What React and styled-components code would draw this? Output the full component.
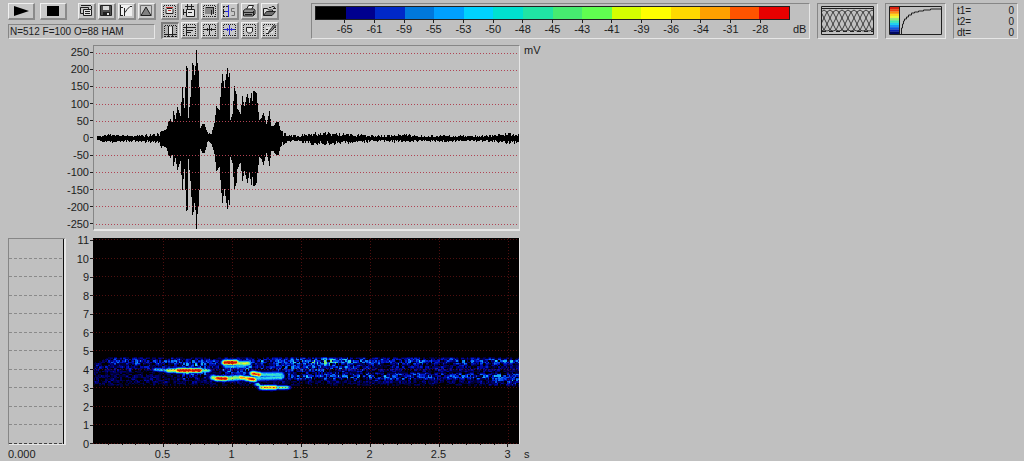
import React from "react";
import styled, { createGlobalStyle, css } from "styled-components";

const GlobalStyle = createGlobalStyle`
  * { box-sizing: border-box; }
  body {
    margin: 0;
    background: #c0c0c0;
    color: #1c1c1c;
    font: 11px/12px "Liberation Sans", Arial, sans-serif;
  }
`;

const sunken = css`
  border: 1px solid;
  border-color: #868686 #e6e6e6 #e6e6e6 #868686;
`;

const Page = styled.div`
  padding: 3px 0 0;
`;

const Toolbar = styled.header`
  display: flex;
  gap: 7px;
  height: 36px;
  padding: 0 6px 0 8px;
`;

const Transport = styled.div`
  display: flex;
  flex-direction: column;
  gap: 4px;
  width: 147px;
`;

const TransportRow = styled.div`
  display: flex;
  gap: 5px;
`;

const SmallButtons = styled.div`
  display: flex;
  gap: 2px;
  margin-left: 6px;
`;

const ToolGrid = styled.div`
  display: grid;
  grid-template-columns: repeat(6, 18px);
  gap: 2px;
  margin: 0 25px 0 -1px;
`;

const ToolButton = styled.button`
  display: grid;
  place-items: center;
  flex: none;
  width: ${(p) => (p.$wide ? 27 : 18)}px;
  height: 17px;
  padding: 0;
  background: ${(p) => (p.$pressed ? "#b4b4b4" : "#c8c8c8")};
  border-style: solid;
  border-width: ${(p) => (p.$pressed ? "2px 1px 1px 2px" : "1px 2px 2px 1px")};
  border-color: ${(p) =>
    p.$pressed ? "#7c7c7c #e4e4e4 #e4e4e4 #7c7c7c" : "#f0f0f0 #8a8a8a #8a8a8a #f0f0f0"};
  svg { display: block; }
`;

const Status = styled.output`
  ${sunken}
  height: 15px;
  padding-left: 1px;
  font-size: 10px;
  line-height: 13px;
  white-space: nowrap;
`;

const Panel = styled.section`
  ${sunken}
  flex: none;
  width: 61px;
  padding: 2px 3px 3px;
  svg { display: block; width: 100%; height: 29px; }
`;

const ScalePanel = styled.section`
  ${sunken}
  flex: 1;
  min-width: 0;
  display: grid;
  grid-template-columns: minmax(0, 1fr) 19px;
  grid-template-rows: 14px 16px;
  padding: 2px 0 0 3px;
`;

const ScaleBar = styled.div`
  grid-column: 1;
  display: flex;
  border: 1px solid #202020;
`;

const Swatch = styled.span`
  flex: 1;
  background: ${(p) => p.$color};
`;

const ScaleLabels = styled.div`
  grid-column: 1;
  display: flex;
`;

const HalfStep = styled.span`
  flex: 1;
`;

const ScaleLabel = styled.span`
  flex: 2;
  text-align: center;
  &::before {
    content: "";
    display: block;
    width: 1px;
    height: 3px;
    margin: 0 auto;
    background: #202020;
  }
`;

const ScaleUnit = styled.span`
  padding: 3px 0 0 3px;
`;

const Times = styled.dl`
  ${sunken}
  flex: none;
  width: 65px;
  display: grid;
  grid-template-columns: 1fr auto;
  grid-auto-rows: 11px;
  font-size: 10px;
  line-height: 11px;
  margin: 0;
  padding: 1px 3px;
  dt, dd { margin: 0; }
`;

const Charts = styled.main`
  display: grid;
  grid-template-columns: 66px 27px minmax(0, 427fr) minmax(0, 504fr);
  align-items: start;
  margin-top: 5px;
`;

const Axis = styled.div`
  grid-column: 2;
  display: flex;
  flex-direction: column;
  justify-content: space-between;
  align-items: flex-end;
  height: ${(p) => p.$height}px;
`;

const AxisLabel = styled.span`
  display: flex;
  align-items: center;
  gap: 1px;
  line-height: 16px;
  &::after {
    content: "";
    width: 3px;
    height: 1px;
    background: #202020;
  }
`;

const WaveFrame = styled.div`
  ${sunken}
  border-bottom-width: 2px;
  margin-top: 1px;
  height: 186px;
  svg { display: block; width: 100%; height: 183px; }
`;

const Unit = styled.span`
  padding-left: 4px;
  align-self: ${(p) => (p.$end ? "end" : "start")};
`;

const SpectrumColumn = styled.div`
  padding: 6px 0 0 8px;
`;

const SpectrumFrame = styled.div`
  ${sunken}
  border-right-width: 2px;
  margin-bottom: 3px;
  svg { display: block; width: 100%; height: 205px; }
`;

const SonogramColumn = styled.div`
  padding-top: 6px;
`;

const SonogramFrame = styled.div`
  background: #000;
  border-right: 1px solid #e6e6e6;
  svg { display: block; width: 100%; height: 206px; }
`;

const Ticks = styled.svg`
  display: block;
  width: 100%;
  height: 4px;
`;

const TimeLabels = styled.div`
  display: flex;
  margin-right: -22px;
`;

const TimeLead = styled.span`
  flex: 35;
`;

const TimeLabel = styled.span`
  flex: 69;
  text-align: center;
`;

/* ---------- colour scale ---------- */

const COLORS = [
  "#000000", "#00008e", "#0028c8", "#0078dc", "#00a0ff", "#00d2ff", "#00e0d0", "#20e4a4",
  "#46ec70", "#60ff50", "#d4ff00", "#ffff00", "#ffd800", "#ffa000", "#ff5400", "#e80000",
];
const LEVELS = [-65, -61, -59, -55, -53, -50, -48, -45, -43, -41, -39, -36, -34, -31, -28];

/* ---------- waveform ---------- */

const ENVELOPE = [
  [97, 2], [108, 3], [130, 2], [150, 3], [156, 3], [160, 6], [166, 9], [168, 16], [170, 19],
  [172, 16], [173, 27], [175, 19], [177, 32], [180, 22], [182, 51], [184, 30], [186, 73],
  [187, 71], [188, 20], [190, 42], [192, 76], [193, 74], [194, 64], [195, 72], [196, 90],
  [197, 76], [198, 68], [199, 52], [200, 10], [202, 14], [204, 14], [206, 8], [208, 4],
  [211, 4], [214, 15], [216, 32], [219, 28], [221, 55], [222, 65], [224, 50], [225, 58],
  [227, 71], [228, 62], [229, 66], [230, 18], [232, 24], [234, 52], [236, 44], [237, 30],
  [240, 24], [242, 42], [244, 32], [247, 45], [249, 35], [251, 46], [252, 38], [253, 48],
  [256, 45], [257, 35], [259, 18], [261, 20], [263, 26], [266, 14], [269, 27], [271, 12],
  [273, 12], [276, 17], [278, 16], [280, 8], [283, 5], [288, 3], [297, 2], [308, 4],
  [318, 5], [340, 4], [360, 3], [380, 2], [400, 3], [423, 2], [457, 2], [480, 2], [500, 3],
  [517, 5], [519, 5],
];

const noise = (a, b) => {
  let h = (Math.imul(a + 11, 374761393) + Math.imul(b + 7, 668265263)) | 0;
  h = Math.imul(h ^ (h >>> 13), 1274126177);
  return ((h ^ (h >>> 16)) >>> 0) / 4294967296;
};

const envelopeAt = (x) => {
  const i = ENVELOPE.findIndex((p) => p[0] >= x);
  if (i <= 0) return ENVELOPE[0][1];
  const [x0, y0] = ENVELOPE[i - 1];
  const [x1, y1] = ENVELOPE[i];
  return y0 + ((y1 - y0) * (x - x0)) / (x1 - x0);
};

const wavePath = (() => {
  let d = "";
  for (let x = 97; x < 520; x++) {
    const a = envelopeAt(x);
    const small = a < 7;
    const reach = (seed) => {
      const n = noise(x, seed);
      return Math.max(1, Math.round(a * (small ? 0.4 + n : 0.98 + 0.02 * n)));
    };
    const up = reach(1);
    const down = reach(2);
    d += `M${x - 94} ${92 - up}h1v${up + down + 1}h-1z`;
  }
  return d;
})();

const MILLIVOLTS = [250, 200, 150, 100, 50, 0, -50, -100, -150, -200, -250];
const KILOHERTZ = [11, 10, 9, 8, 7, 6, 5, 4, 3, 2, 1, 0];
const SECONDS = ["0.5", "1", "1.5", "2", "2.5", "3"];

function Waveform() {
  return (
    <svg viewBox="0 0 425 183" preserveAspectRatio="none" shapeRendering="crispEdges" role="img" aria-label="Waveform">
      <path d={wavePath} fill="#000" />
      {MILLIVOLTS.filter((v) => v !== 0).map((v) => {
        const y = Math.round(92 - v * 0.342) + 0.5;
        return <line key={v} x1="2" x2="425" y1={y} y2={y} stroke="#b04454" strokeDasharray="1 2" />;
      })}
    </svg>
  );
}

/* ---------- sonogram ---------- */

// Tonal ridges: start x, start y, end x, end y, half thickness, strength.
const RIDGES = [
  [156, 369, 168, 370, 2, 0.48],
  [168, 370, 180, 370, 2.4, 0.74],
  [178, 370, 199, 370, 2.6, 1.08],
  [199, 370, 207, 370, 2, 0.64],
  [225, 362, 235, 362, 2.8, 1.08],
  [237, 363, 247, 363, 2.8, 0.74],
  [226, 366, 242, 366, 2.4, 0.44],
  [213, 377, 216, 378, 2.8, 0.72],
  [217, 378, 225, 378, 2.6, 1.08],
  [227, 378, 240, 377, 3, 0.68],
  [240, 377, 247, 378, 2.4, 0.88],
  [247, 378, 253, 379, 2.6, 1.02],
  [253, 373, 258, 374, 2.6, 1.02],
  [260, 374, 280, 374, 2.8, 0.54],
  [256, 378, 280, 377, 2.8, 0.5],
  [258, 384, 261, 387, 2, 0.66],
  [262, 387, 274, 387, 2.4, 0.88],
  [274, 387, 286, 387, 2, 0.62],
];

const ramp = (v, a, b) => Math.min(1, Math.max(0, (v - a) / (b - a)));
const bump = (v, centre, half) => Math.max(0, 1 - ((v - centre) / half) ** 2);

const strengthAt = (x, y) => {
  const cx = Math.floor((x * 2) / 3);
  const cy = Math.floor((y * 2) / 3);
  const n = noise(cx, cy) * 0.55 + noise(cx >> 1, (cy >> 1) + 900) * 0.45;
  const early = ramp(x, 98, 112);
  const late = ramp(x, 245, 275);
  let base = bump(y, 361, 5) * (0.27 + 0.02 * late + 0.16 * bump(x, 322, 40)) * early;
  base = Math.max(base, bump(y, 367, 8) * (0.17 + 0.12 * bump(x, 315, 60)));
  base = Math.max(base, bump(y, 376, 5) * (0.13 + 0.16 * late));
  base = Math.max(base, bump(y, 380, 7) * (0.14 + 0.13 * ramp(x, 480, 510)));
  if (x > 181 && x < 206) base = Math.max(base, bump(y, 369, 13) * (cx % 3 ? 0.4 : 0.2));
  if (x > 222 && x < 252) base = Math.max(base, bump(y, 368, 12) * 0.32);
  let value = base * Math.max(0, n * 1.9 - 0.26);
  RIDGES.forEach(([x0, y0, x1, y1, half, power]) => {
    const dy = (y - (y0 + (y1 - y0) * ramp(x, x0, x1))) / half;
    const dx = Math.max(0, x0 - x, x - x1) / 4;
    value = Math.max(value, power * Math.exp(-dy * dy - dx * dx) * (0.82 + 0.26 * n));
  });
  return value;
};

const HEAT = [
  "#000000", "#000038", "#00006c", "#0008a4", "#0020d0", "#0450ec", "#0c7cf4", "#18a8f4", "#2cd0e8",
  "#40e4c0", "#60ec90", "#90f060", "#c8f040", "#f4ec30", "#ffc820", "#ff9018", "#f85810", "#e82c08", "#c81800",
];

const sonogramPaths = (() => {
  const paths = HEAT.map(() => "");
  for (let y = 355; y < 393; y++) {
    for (let x = 94; x < 519; x++) {
      const level = Math.min(HEAT.length - 1, Math.floor(strengthAt(x, y) * 18.5));
      if (level > 0) paths[level] += `M${x - 93} ${y - 238}h1v1h-1z`;
    }
  }
  return paths;
})();

function Sonogram() {
  return (
    <svg viewBox="0 0 426 206" preserveAspectRatio="none" shapeRendering="crispEdges" role="img" aria-label="Sonogram">
      <rect width="426" height="206" fill="#020000" />
      {sonogramPaths.map((d, i) => (d ? <path key={i} d={d} fill={HEAT[i]} /> : null))}
      <g stroke="#8c1c1c" strokeDasharray="1 2" opacity="0.55">
        {KILOHERTZ.map((k) => (
          <line key={k} x1="0" x2="426" y1={Math.round(205 - k * 18.55) + 0.5} y2={Math.round(205 - k * 18.55) + 0.5} />
        ))}
        {SECONDS.map((s, i) => (
          <line key={s} x1={Math.round(70 + i * 68.9) + 0.5} x2={Math.round(70 + i * 68.9) + 0.5} y1="0" y2="206" />
        ))}
      </g>
    </svg>
  );
}

function TimeTicks() {
  const ticks = Array.from({ length: 30 }, (_, i) => i + 1);
  return (
    <Ticks viewBox="0 0 427 4" preserveAspectRatio="none" shapeRendering="crispEdges" aria-hidden="true">
      {ticks.map((i) => (
        <rect key={i} x={Math.round(1 + i * 13.78)} y="0" width="1" height={i % 5 ? 1 : 3} fill="#181818" />
      ))}
    </Ticks>
  );
}

function Spectrum() {
  return (
    <svg viewBox="0 0 55 205" preserveAspectRatio="none" shapeRendering="crispEdges" role="img" aria-label="Spectrum">
      {KILOHERTZ.slice(1).map((k) => (
        <line key={k} x1="0" x2="55" y1={Math.round(204 - k * 18.55) + 0.5} y2={Math.round(204 - k * 18.55) + 0.5}
          stroke={k ? "#8a8a8a" : "#404040"} strokeDasharray="3 2" />
      ))}
      <rect x="54" y="0" width="1" height="205" fill="#101010" />
    </svg>
  );
}

/* ---------- toolbar drawings ---------- */

const dots = "M2 1.5h12M2 12.5h12M1.5 2v11M13.5 2v11";

const ICONS = {
  copy: (
    <>
      <path d="M1.5 3.5h8v6h-8zM2 1.5h10M12.5 2v3" />
      <path d="M4.5 5.5h8v6h-8z" fill="#e4e4e4" />
      <path d="M6 7.5h5M6 9.5h5" />
    </>
  ),
  save: (
    <>
      <path d="M1.5 1.5h11v10h-11z" fill="#505050" />
      <path d="M4 2h6v4H4z" fill="#d8d8d8" stroke="none" />
      <path d="M4 8h7v4H4z" fill="#202020" stroke="none" />
      <path d="M8 9h2v2H8z" fill="#e4e4e4" stroke="none" />
    </>
  ),
  curve: (
    <>
      <path d="M1 1h12v11H1z" fill="#f0f0f0" stroke="none" />
      <path d="M1.5 1v11M1 3.5h3M5.5 4v8M6 8.5l2-3 3-3h2M2 11.5h2" />
    </>
  ),
  peak: (
    <>
      <path d="M1.5 1.5h11v10h-11z" stroke="#707070" />
      <path d="M2 11.5L7 3l5 8.5z" fill="#808080" />
    </>
  ),
  redFrame: (
    <>
      <path d={dots} strokeDasharray="1 1" />
      <path d="M4 5.5l1-1h5l1 1v4h-7z" fill="#e8e8e8" />
      <path d="M4 3.5h7M6 6.5h3" stroke="#c03030" />
    </>
  ),
  stamp: (
    <>
      <path d="M3 2.5h9M5.5 0v5M9.5 0v5M1.5 5v6" />
      <path d="M4.5 5.5h8v7h-8z" fill="#e8e8e8" />
      <path d="M6 8.5h4M1 8.5h3" />
    </>
  ),
  shade: (
    <>
      <path d={dots} strokeDasharray="1 1" />
      <path d="M3 3h9v7H3z" fill="#888" stroke="none" />
      <path d="M4 3.5h8M11.5 4v6M9.5 6v5" />
    </>
  ),
  blueS: (
    <>
      <path d="M1.5 2v11M1 2.5h6M1 7.5h6M1 12.5h6" strokeDasharray="2 1" />
      <path d="M6.5 1v12M3 7.5h4" stroke="#2828e0" />
      <path d="M12.5 4.5H9.5v3h3v4h-3" stroke="#707070" />
    </>
  ),
  print: (
    <>
      <path d="M4.5 5.5l2-4h5l-2 4" fill="#f0f0f0" />
      <path d="M1.5 6.5l2-1.5h8l1.5 1v4l-2 2h-9.5z" fill="#909090" />
      <path d="M2 8.5h9M3 10.5h7M11.5 7v5" />
    </>
  ),
  open: (
    <>
      <path d="M1.5 11.5v-7h4l1 1.5h4v2" fill="#d8d8d8" />
      <path d="M1.5 11.5l3-4h9l-3.5 4z" fill="#707070" />
      <path d="M7 3.5h2l1-1h2l1 2M11 4.5h3" />
    </>
  ),
  columns: (
    <>
      <path d={dots} strokeDasharray="1 1" />
      <path d="M6 3h3v7H6z" fill="#e8e8e8" stroke="none" />
      <path d="M5.5 2v11M9.5 2v11M2 10.5h11" />
    </>
  ),
  rows: (
    <>
      <path d={dots} strokeDasharray="1 1" />
      <path d="M4.5 2v10M2 4.5h11M5 7.5h6M5 9.5h4" />
    </>
  ),
  cross: (
    <>
      <path d={dots} strokeDasharray="1 1" />
      <path d="M7.5 2v10M2 6.5h11M5.5 5v3M9.5 5v3" />
    </>
  ),
  blueCross: (
    <>
      <path d={dots} strokeDasharray="1 1" />
      <path d="M7.5 2v10M2 6.5h11M5.5 5v3M9.5 5v3" stroke="#2828d0" />
    </>
  ),
  pocket: (
    <>
      <path d={dots} strokeDasharray="1 1" />
      <path d="M4.5 4.5h6v4l-2 1.5h-2l-2-1.5z" fill="#e8e8e8" />
      <path d="M5 4.5h5" />
    </>
  ),
  pencil: (
    <>
      <path d={dots} strokeDasharray="1 1" />
      <path d="M4 4h7v6H4z" fill="#e0e0e0" stroke="none" />
      <path d="M12.5 1.5l-5 6-1 2 2.5-1 5-6" fill="#909090" />
      <path d="M4 6.5h2M4 10.5h3" />
    </>
  ),
};

function Tool({ icon, label, pressed }) {
  return (
    <ToolButton type="button" aria-label={label} aria-pressed={pressed} $pressed={pressed}>
      <svg width="15" height="14" viewBox="0 0 15 14" fill="none" stroke="#202020" aria-hidden="true">
        {ICONS[icon]}
      </svg>
    </ToolButton>
  );
}

const FILE_TOOLS = [
  ["copy", "Copy"], ["save", "Save"], ["curve", "Transfer curve"], ["peak", "Envelope"],
];
const VIEW_TOOLS = [
  ["redFrame", "Frame"], ["stamp", "Markers"], ["shade", "Shading"], ["blueS", "Spectrum section"],
  ["print", "Print"], ["open", "Open"], ["columns", "Time cursors", true], ["rows", "Frequency cursors"],
  ["cross", "Crosshair"], ["blueCross", "Tracking crosshair"], ["pocket", "Region"], ["pencil", "Annotate"],
];

function WindowShape() {
  const arcs = Array.from({ length: 13 }, (_, i) => {
    const x = i * 6 - 24;
    return `M${x} 25l3-1 9-18 3-2 3 2 9 18 3 1`;
  });
  return (
    <svg viewBox="0 0 53 29" preserveAspectRatio="none" fill="none" stroke="#202020" role="img" aria-label="Window overlap">
      <path d={arcs.join("")} strokeWidth="0.8" />
      <path d="M.5 .5h52v28h-52zM1 2.5h51" />
      <path d="M1 25.5h51" strokeDasharray="4 3" />
    </svg>
  );
}

const RAINBOW = [
  "#d82010", "#f04810", "#ff9010", "#ffd820", "#e8f840", "#90f070", "#40e8b0", "#20d0f0",
  "#1898f8", "#1058e0", "#0820b0", "#000860",
];

function PaletteCurve() {
  return (
    <svg viewBox="0 0 53 29" preserveAspectRatio="none" fill="none" stroke="#202020" role="img" aria-label="Palette curve">
      {RAINBOW.map((c, i) => (
        <rect key={c} x="1" y={1 + i * 2.25} width="9" height="2.3" fill={c} stroke="none" />
      ))}
      <path d="M.5 .5h52v28h-52zM10.5 1v27" />
      <path d="M12.5 28v-6h1v-4h1v-3h1v-2h2v-2h2v-2h3v-2h3v-1h4v-1h5v-1h7v-1h11" />
    </svg>
  );
}

export default function App() {
  return (
    <Page>
      <GlobalStyle />
      <Toolbar>
        <Transport>
          <TransportRow>
            <ToolButton type="button" aria-label="Play" $wide>
              <svg width="18" height="12" viewBox="0 0 18 12" aria-hidden="true">
                <path d="M2 1l15 5-15 5z" fill="#000" />
              </svg>
            </ToolButton>
            <ToolButton type="button" aria-label="Stop" $wide>
              <svg width="12" height="10" viewBox="0 0 12 10" aria-hidden="true">
                <path d="M0 0h12v10H0z" fill="#000" />
              </svg>
            </ToolButton>
            <SmallButtons>
              {FILE_TOOLS.map(([icon, label]) => <Tool key={icon} icon={icon} label={label} />)}
            </SmallButtons>
          </TransportRow>
          <Status>N=512 F=100 O=88 HAM</Status>
        </Transport>
        <ToolGrid>
          {VIEW_TOOLS.map(([icon, label, pressed]) => (
            <Tool key={icon} icon={icon} label={label} pressed={pressed} />
          ))}
        </ToolGrid>
        <ScalePanel>
          <ScaleBar>{COLORS.map((c) => <Swatch key={c} $color={c} />)}</ScaleBar>
          <ScaleLabels>
            <HalfStep />
            {LEVELS.map((l) => <ScaleLabel key={l}>{l}</ScaleLabel>)}
            <HalfStep />
          </ScaleLabels>
          <ScaleUnit>dB</ScaleUnit>
        </ScalePanel>
        <Panel><WindowShape /></Panel>
        <Panel><PaletteCurve /></Panel>
        <Times>
          <dt>t1=</dt><dd>0</dd>
          <dt>t2=</dt><dd>0</dd>
          <dt>dt=</dt><dd>0</dd>
        </Times>
      </Toolbar>
      <Charts>
        <Axis $height={188}>
          {MILLIVOLTS.map((v) => <AxisLabel key={v}>{v}</AxisLabel>)}
        </Axis>
        <WaveFrame><Waveform /></WaveFrame>
        <Unit>mV</Unit>
        <SpectrumColumn>
          <SpectrumFrame><Spectrum /></SpectrumFrame>
          0.000
        </SpectrumColumn>
        <Axis $height={220}>
          {KILOHERTZ.map((k) => <AxisLabel key={k}>{k}</AxisLabel>)}
        </Axis>
        <SonogramColumn>
          <SonogramFrame><Sonogram /></SonogramFrame>
          <TimeTicks />
          <TimeLabels>
            <TimeLead />
            {SECONDS.map((s) => <TimeLabel key={s}>{s}</TimeLabel>)}
          </TimeLabels>
        </SonogramColumn>
        <Unit $end>s</Unit>
      </Charts>
    </Page>
  );
}
